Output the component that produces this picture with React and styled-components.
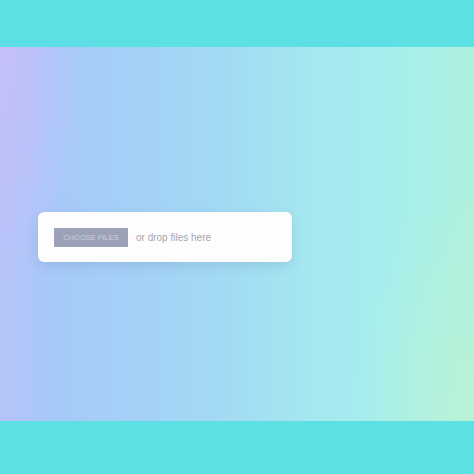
import React from "react";
import styled, { createGlobalStyle } from "styled-components";

const GlobalStyle = createGlobalStyle`
  html, body {
    margin: 0;
    padding: 0;
    background: #5ce0e4;
  }
  body {
    font-family: "Liberation Sans", Arial, sans-serif;
  }
`;

const Page = styled.div`
  display: flex;
  flex-direction: column;
  width: 474px;
  height: 474px;
`;

const Band = styled.div`
  height: ${(p) => p.h}px;
  background: #5ce0e4;
  flex-shrink: 0;
`;

const Stage = styled.main`
  flex: 1;
  display: flex;
  align-items: flex-start;
  padding: 165px 0 0 38px;
  background:
    radial-gradient(ellipse 90px 260px at 0 0, rgba(200, 190, 250, 0.85), rgba(200, 190, 250, 0) 100%),
    radial-gradient(ellipse 120px 240px at 100% 100%, rgba(188, 242, 212, 0.8), rgba(188, 242, 212, 0) 100%),
    linear-gradient(
      90deg,
      #b6c4f8 0%,
      #a6caf8 12%,
      #a4d2f6 32%,
      #a3dcf3 50%,
      #a5e8f0 66%,
      #a6eeee 80%,
      #aaf0e6 92%,
      #b0f0dc 100%
    );
`;

const DropZone = styled.div`
  width: 254px;
  height: 50px;
  box-sizing: border-box;
  display: flex;
  align-items: center;
  padding: 0 16px;
  background: #fdfdfd;
  border-radius: 6px;
  box-shadow: 0 4px 12px rgba(60, 90, 130, 0.15);
`;

const ChooseButton = styled.button`
  width: 74px;
  height: 19px;
  padding: 0;
  border: none;
  border-radius: 1px;
  background: #9ca1b8;
  color: #cdd0dc;
  font-family: inherit;
  font-size: 7.5px;
  text-transform: uppercase;
  cursor: pointer;
`;

const Hint = styled.span`
  margin-left: 8px;
  color: #a3a5ae;
  font-size: 10px;
`;

export default function App() {
  return (
    <>
      <GlobalStyle />
      <Page>
        <Band h={47} />
        <Stage>
          <DropZone>
            <ChooseButton>Choose files</ChooseButton>
            <Hint>or drop files here</Hint>
          </DropZone>
        </Stage>
        <Band h={53} />
      </Page>
    </>
  );
}
